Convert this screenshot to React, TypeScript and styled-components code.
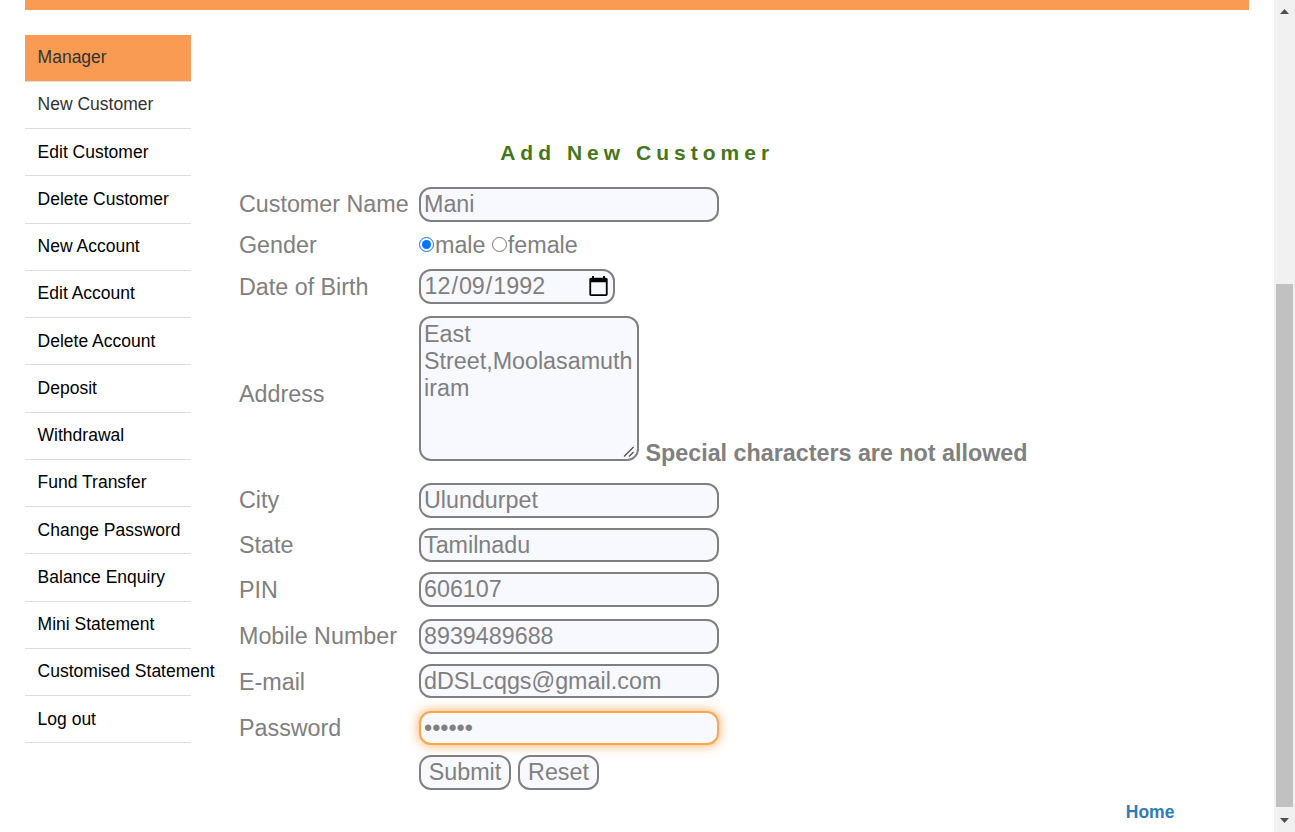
import React from "react";
import styled, { createGlobalStyle, css } from "styled-components";

const GlobalStyle = createGlobalStyle`
  * { box-sizing: border-box; }
  html, body { margin: 0; padding: 0; background: #fff; overflow: hidden; }
  body { font-family: "Liberation Sans", Arial, sans-serif; }
`;

const Page = styled.div`
  display: flex;
  width: 1295px;
  height: 832px;
  overflow: hidden;
`;

const Content = styled.div`
  flex: 1;
  min-width: 0;
  padding: 0 25px;
`;

const Banner = styled.header`
  height: 10px;
  background: #f99b52;
`;

const Columns = styled.div`
  display: flex;
  gap: 48px;
`;

const Menu = styled.ul`
  list-style: none;
  margin: 24.7px 0 0;
  padding: 0;
  width: 166px;
  flex: none;
`;

const MenuItem = styled.li<{ $active?: boolean; $soft?: boolean }>`
  height: 47.25px;
  padding: 0.5px 0 0 12.6px;
  border-bottom: 1px solid #ddd;
  background: ${(p) => (p.$active ? "#f99b52" : "transparent")};
  background-clip: padding-box;
  color: ${(p) => (p.$active || p.$soft ? "#333" : "#000")};
  font-size: 17.5px;
  line-height: 44.8px;
  white-space: nowrap;
`;

const Main = styled.main`
  flex: 1;
  min-width: 0;
  color: #808080;
  font-size: 23.3px;
`;

const Title = styled.h1`
  margin: 130px 0 0;
  padding-left: 261.2px;
  height: 42px;
  font-size: 21px;
  line-height: 26px;
  letter-spacing: 5.02px;
  color: #46761a;
  white-space: nowrap;
`;

const Row = styled.div<{ $height: number }>`
  display: grid;
  grid-template-columns: 180px 1fr;
  height: ${(p) => p.$height}px;
`;

const Label = styled.label`
  align-self: center;
  padding-top: 0.5px;
  white-space: nowrap;
`;

const Field = styled.div<{ $top: number }>`
  display: flex;
  align-items: flex-start;
  padding-top: ${(p) => p.$top}px;
`;

const control = css`
  margin: 0;
  border: 2px solid #808080;
  border-radius: 12px;
  background: #f8f8ff;
  color: #808080;
  font-family: inherit;
  font-size: 23.3px;
  outline: none;
`;

const TextInput = styled.input<{ $height?: number; $focused?: boolean }>`
  ${control}
  width: 300px;
  height: ${(p) => p.$height ?? 35}px;
  padding: 1px 3px;
  ${(p) =>
    p.$focused &&
    css`
      border-color: #ffa64d;
      box-shadow: 0 0 12px rgba(255, 140, 40, 0.75);
    `}
`;

const DateInput = styled.input`
  ${control}
  width: 196px;
  height: 35px;
  padding: 1px 1px 1px 2.5px;
`;

const AddressBox = styled.div`
  position: relative;
  height: 145px;
`;

const AddressInput = styled.textarea`
  ${control}
  display: block;
  width: 220px;
  height: 145px;
  padding: 3px 3px 2px;
  line-height: 27px;
  overflow: hidden;
  resize: none;
`;

const Grip = styled.svg`
  position: absolute;
  right: 4px;
  bottom: 3px;
  width: 12px;
  height: 12px;
`;

const Warning = styled.strong`
  align-self: flex-end;
  margin: 0 0 11px 6.5px;
  white-space: nowrap;
`;

const RadioGroup = styled.div`
  display: flex;
  align-items: center;
  height: 38px;
`;

const Radio = styled.input`
  width: 15px;
  height: 15px;
  margin: 0 1px 2px 0;
`;

const RadioText = styled.span`
  margin-right: 6.3px;
`;

const Button = styled.button<{ $width: number }>`
  ${control}
  width: ${(p) => p.$width}px;
  height: 35px;
  padding: 0;
  margin-right: 7px;
`;

const Home = styled.a`
  display: block;
  margin: 7px 74.6px 0 auto;
  width: fit-content;
  font-size: 17.5px;
  line-height: 20px;
  font-weight: bold;
  color: #337ab7;
`;

const Scrollbar = styled.aside`
  flex: none;
  display: flex;
  flex-direction: column;
  align-items: center;
  width: 21px;
  background: #f1f1f1;
`;

const Arrow = styled.svg`
  display: block;
  width: 21px;
  height: 25px;
`;

const Thumb = styled.div`
  width: 17px;
  height: 523px;
  margin-top: 259px;
  background: #c1c1c1;
`;

const menu = [
  "Manager", "New Customer", "Edit Customer", "Delete Customer", "New Account",
  "Edit Account", "Delete Account", "Deposit", "Withdrawal", "Fund Transfer",
  "Change Password", "Balance Enquiry", "Mini Statement", "Customised Statement", "Log out",
];

const details = [
  { label: "City", value: "Ulundurpet", row: 44.5, top: 5, height: 35 },
  { label: "State", value: "Tamilnadu", row: 44.5, top: 5.5, height: 34 },
  { label: "PIN", value: "606107", row: 46, top: 5, height: 35 },
  { label: "Mobile Number", value: "8939489688", row: 46, top: 6, height: 35 },
  { label: "E-mail", value: "dDSLcqgs@gmail.com", row: 46, top: 5, height: 34 },
  { label: "Password", value: "secret", row: 46, top: 6, height: 34, password: true },
];

export default function App() {
  return (
    <>
      <GlobalStyle />
      <Page>
        <Content>
          <Banner />
          <Columns>
            <Menu>
              {menu.map((item, i) => (
                <MenuItem key={item} $active={i === 0} $soft={i === 1}>{item}</MenuItem>
              ))}
            </Menu>
            <Main>
              <Title>Add New Customer</Title>
              <Row $height={44}>
                <Label>Customer Name</Label>
                <Field $top={5}><TextInput defaultValue="Mani" /></Field>
              </Row>
              <Row $height={38}>
                <Label>Gender</Label>
                <RadioGroup>
                  <Radio type="radio" name="gender" defaultChecked />
                  <RadioText>male</RadioText>
                  <Radio type="radio" name="gender" />
                  <RadioText>female</RadioText>
                </RadioGroup>
              </Row>
              <Row $height={46}>
                <Label>Date of Birth</Label>
                <Field $top={5}><DateInput type="date" defaultValue="1992-12-09" /></Field>
              </Row>
              <Row $height={168}>
                <Label>Address</Label>
                <Field $top={6}>
                  <AddressBox>
                    <AddressInput spellCheck={false} defaultValue="East Street,Moolasamuthiram" />
                    <Grip viewBox="0 0 12 12">
                      <path d="M1 10.5L10.5 1M6 10.5L10.5 6" stroke="#505050" strokeWidth="1.3" fill="none" />
                    </Grip>
                  </AddressBox>
                  <Warning>Special characters are not allowed</Warning>
                </Field>
              </Row>
              {details.map((d) => (
                <Row key={d.label} $height={d.row}>
                  <Label>{d.label}</Label>
                  <Field $top={d.top}>
                    <TextInput
                      type={d.password ? "password" : "text"}
                      defaultValue={d.value}
                      $height={d.height}
                      $focused={d.password}
                    />
                  </Field>
                </Row>
              ))}
              <Row $height={44}>
                <span />
                <Field $top={4}>
                  <Button type="submit" $width={92}>Submit</Button>
                  <Button type="reset" $width={81}>Reset</Button>
                </Field>
              </Row>
              <Home>Home</Home>
            </Main>
          </Columns>
        </Content>
        <Scrollbar>
          <Arrow viewBox="0 0 21 25"><path d="M6 14h9l-4.5-5z" fill="#505050" /></Arrow>
          <Thumb />
          <Arrow viewBox="0 0 21 25"><path d="M6 11h9l-4.5 5z" fill="#505050" /></Arrow>
        </Scrollbar>
      </Page>
    </>
  );
}
